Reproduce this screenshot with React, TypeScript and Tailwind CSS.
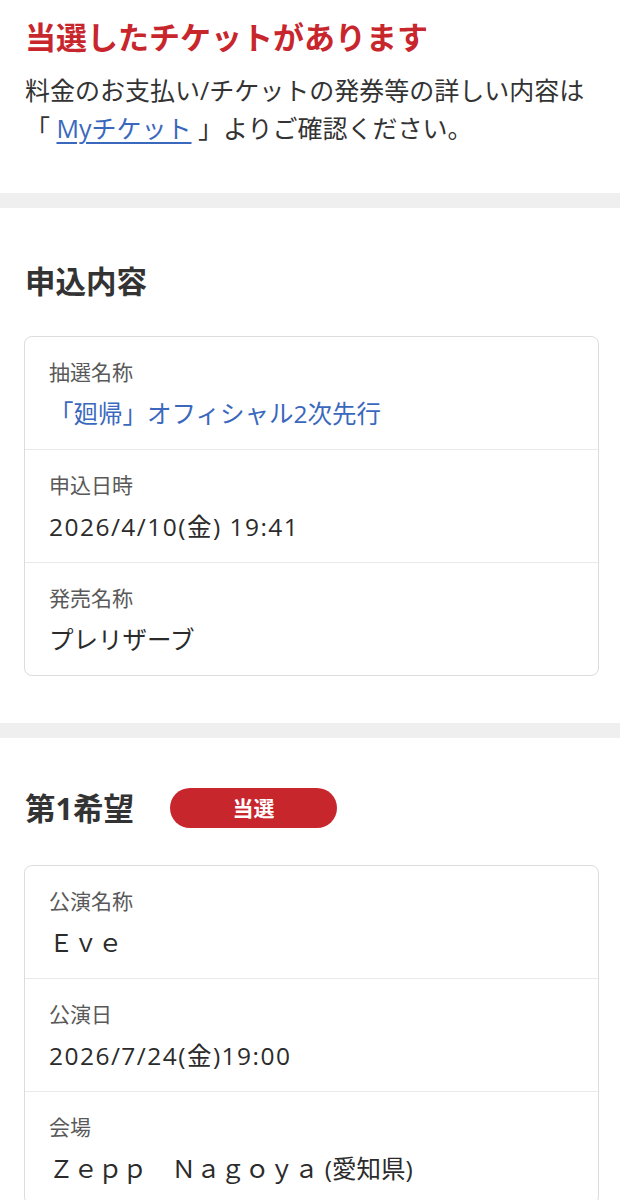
import React from 'react';

type Row = {
  label: string;
  value: string;
  link?: boolean;
  date?: boolean;
};

const applyRows: Row[] = [
  { label: '抽選名称', value: '「廻帰」オフィシャル2次先行', link: true },
  { label: '申込日時', value: '2026/4/10(金) 19:41', date: true },
  { label: '発売名称', value: 'プレリザーブ' },
];

const wishRows: Row[] = [
  { label: '公演名称', value: 'Ｅｖｅ' },
  { label: '公演日', value: '2026/7/24(金)19:00', date: true },
  { label: '会場', value: 'Ｚｅｐｐ　Ｎａｇｏｙａ (愛知県)' },
];

function InfoCard({ rows }: { rows: Row[] }) {
  return (
    <div className="ml-[24px] mr-[21px] rounded-[8px] border border-[#dcdcdc] bg-white">
      {rows.map((row, i) => (
        <div
          key={row.label}
          className={`flex flex-col px-[24px] pt-[19px] ${i > 0 ? 'h-[113px] border-t border-[#e9e9e9]' : 'h-[112px]'}`}
        >
          <div className="font-['Noto_Sans_CJK_JP',sans-serif] text-[21px] leading-[30px] text-[#595959]">{row.label}</div>
          <div
            className={`mt-[11px] text-[24.5px] leading-[34px] ${row.link ? 'text-[#3a68bd]' : 'text-[#2b2b2b]'} ${row.date ? 'tracking-[0.06em]' : ''}`}
          >
            {row.value}
          </div>
        </div>
      ))}
    </div>
  );
}

function Band() {
  return <div className="h-[15px] bg-[#efefef]" />;
}

export default function App() {
  return (
    <div className="min-h-[1200px] bg-white font-['Open_Sans','Noto_Sans_CJK_JP',sans-serif] text-[#2b2b2b]">
      <section className="px-[25px] pt-[16px] pb-[46px]">
        <h1 className="font-['Noto_Sans_CJK_JP',sans-serif] text-[31px] font-bold leading-[40px] text-[#c8262d]">
          当選したチケットがあります
        </h1>
        <p className="mt-[15px] text-[25px] leading-[38px] text-[#333]">
          料金のお支払い/チケットの発券等の詳しい内容は
          <br />
          「 <a href="#" className="text-[#3a68bd] underline underline-offset-[4px] decoration-[1.5px]">Myチケット</a> 」よりご確認ください。
        </p>
      </section>

      <Band />

      <section className="pt-[52px] pb-[47px]">
        <h2 className="mb-[36px] px-[25px] font-['Noto_Sans_CJK_JP',sans-serif] text-[30.5px] font-bold leading-[40px] text-[#333]">
          申込内容
        </h2>
        <InfoCard rows={applyRows} />
      </section>

      <Band />

      <section className="pt-[50px] pb-[40px]">
        <div className="mb-[37px] flex items-center px-[25px]">
          <h2 className="text-[30.5px] font-bold leading-[40px] text-[#333]">第1希望</h2>
          <span className="ml-[36px] flex h-[40px] w-[167px] items-center justify-center rounded-full bg-[#c8262d] font-['Noto_Sans_CJK_JP',sans-serif] text-[21px] font-bold text-white">
            当選
          </span>
        </div>
        <InfoCard rows={wishRows} />
      </section>
    </div>
  );
}
